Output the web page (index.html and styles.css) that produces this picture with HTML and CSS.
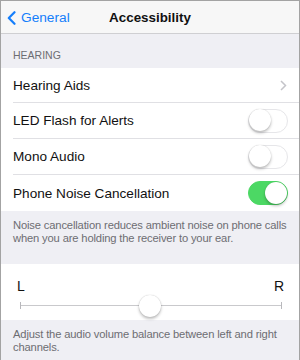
FILE: index.html
```html
<!DOCTYPE html>
<html lang="en">
<head>
    <meta charset="UTF-8">
    <title>Accessibility</title>
    <meta name="viewport" content="width=device-width, initial-scale=1">
    <link rel="stylesheet" href="styles.css">
</head>
<body>
    <div class="screen">
        <div class="navbar">
            <div class="back">
                <svg class="back-icon" width="9" height="14" viewBox="0 0 9 14">
                    <path d="M7.5 1.2 L1.8 7 L7.5 12.8" fill="none" stroke="#157efb" stroke-width="2.2" stroke-linecap="round" stroke-linejoin="round"/>
                </svg>
                <span>General</span>
            </div>
            <div class="title">Accessibility</div>
        </div>

        <div class="section-header">HEARING</div>
        <div class="group">
            <div class="row">
                <span class="label">Hearing Aids</span>
                <svg class="chevron" width="7" height="11" viewBox="0 0 7 11">
                    <path d="M1 1 L5.5 5.5 L1 10" fill="none" stroke="#c4c4c9" stroke-width="1.5"/>
                </svg>
            </div>
            <div class="row">
                <span class="label">LED Flash for Alerts</span>
                <div class="switch"><div class="knob"></div></div>
            </div>
            <div class="row">
                <span class="label">Mono Audio</span>
                <div class="switch"><div class="knob"></div></div>
            </div>
            <div class="row">
                <span class="label">Phone Noise Cancellation</span>
                <div class="switch on"><div class="knob"></div></div>
            </div>
        </div>
        <div class="section-footer first">
            Noise cancellation reduces ambient noise on phone calls when you are holding the receiver to your ear.
        </div>

        <div class="group slider-group">
            <div class="slider-labels">
                <span>L</span>
                <span>R</span>
            </div>
            <div class="slider">
                <div class="track"></div>
                <div class="thumb"></div>
            </div>
        </div>
        <div class="section-footer">
            Adjust the audio volume balance between left and right channels.
        </div>
    </div>
</body>
</html>
```

FILE: styles.css
```css
* {
    box-sizing: border-box;
}

body {
    margin: 0;
    font-family: "Liberation Sans", Arial, sans-serif;
    background: #efeff4;
}

.screen {
    width: 300px;
    height: 360px;
    border: 1px solid #a3a3a3;
    border-bottom: none;
    background: #efeff4;
    overflow: hidden;
}

.navbar {
    height: 33px;
    background: #f7f7f7;
    border-bottom: 1px solid #cfcfd2;
    display: flex;
    align-items: center;
    position: relative;
}

.back {
    display: flex;
    align-items: center;
    gap: 5px;
    padding-left: 6px;
    color: #157efb;
    font-size: 13.7px;
}

.back-icon {
    margin-top: 1px;
}

.title {
    position: absolute;
    left: 0;
    right: 0;
    text-align: center;
    font-size: 13.4px;
    font-weight: bold;
    color: #111;
    pointer-events: none;
}

.section-header {
    height: 34px;
    padding: 15px 12px 0;
    font-size: 10.5px;
    color: #6d6d72;
}

.group {
    background: #fff;
}

.row {
    height: 36px;
    margin-left: 12px;
    padding-right: 11px;
    display: flex;
    align-items: center;
    justify-content: space-between;
    border-bottom: 1px solid #e0e0e4;
    font-size: 13.6px;
    color: #111;
}

.row:first-child {
    height: 35px;
}

.row:last-child {
    border-bottom: none;
}

.chevron {
    margin-right: 1px;
}

.switch {
    width: 40px;
    height: 24px;
    border-radius: 12px;
    border: 1.5px solid #e6e6e9;
    background: #fff;
    position: relative;
}

.switch .knob {
    position: absolute;
    top: -0.5px;
    left: -0.5px;
    width: 22px;
    height: 22px;
    border-radius: 50%;
    background: #fff;
    box-shadow: 0 2px 3px rgba(0, 0, 0, 0.25), 0 0 1px rgba(0, 0, 0, 0.2);
}

.switch.on {
    background: #4cd864;
    border-color: #4cd864;
}

.switch.on .knob {
    left: 15.5px;
}

.section-footer {
    padding: 8px 4px 0 12px;
    font-size: 11.2px;
    letter-spacing: -0.15px;
    line-height: 13px;
    color: #6d6d72;
}

.section-footer.first {
    height: 53px;
}

.slider-group {
    height: 56px;
    padding: 14px 15px 0 16px;
}

.slider-labels {
    display: flex;
    justify-content: space-between;
    font-size: 14px;
    color: #111;
}

.slider {
    position: relative;
    height: 22px;
    margin-top: 1px;
}

.track {
    position: absolute;
    left: 4px;
    right: 3px;
    top: 10px;
    height: 1px;
    background: #c9c9cc;
}

.track::before,
.track::after {
    content: "";
    position: absolute;
    top: -3px;
    width: 1px;
    height: 7px;
    background: #b8b8bc;
}

.track::before {
    left: -1px;
}

.track::after {
    right: -1px;
}

.thumb {
    position: absolute;
    left: 122px;
    top: 0;
    width: 22px;
    height: 22px;
    border-radius: 50%;
    background: #fff;
    box-shadow: 0 2px 3px rgba(0, 0, 0, 0.25), 0 0 1px rgba(0, 0, 0, 0.25);
}
```
